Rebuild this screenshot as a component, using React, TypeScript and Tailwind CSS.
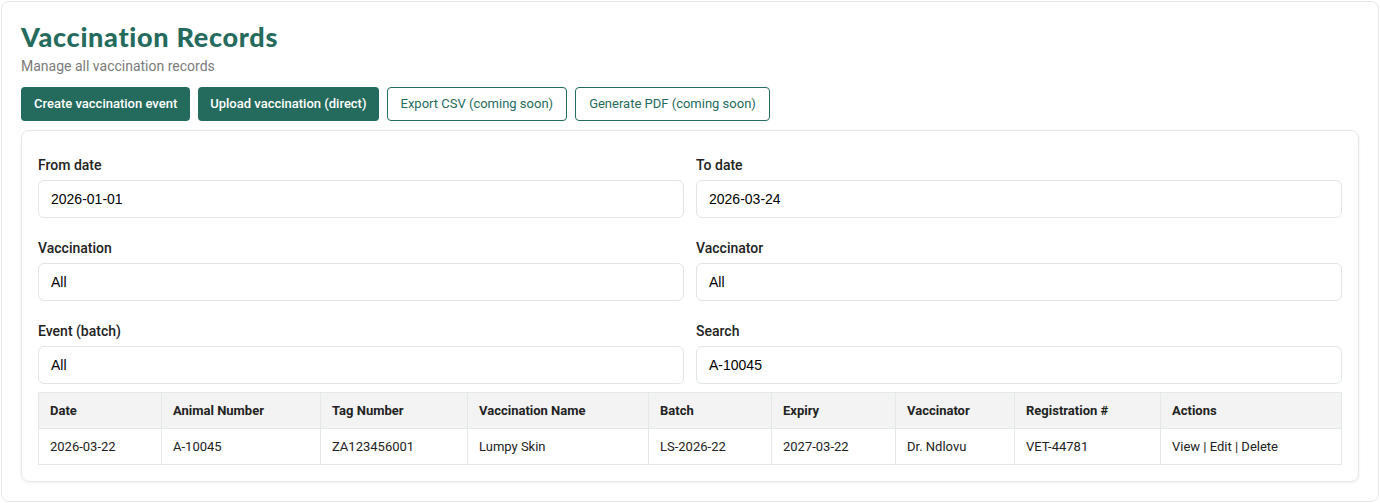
const filters = [
    { label: 'From date', value: '2026-01-01' },
    { label: 'To date', value: '2026-03-24' },
    { label: 'Vaccination', value: 'All' },
    { label: 'Vaccinator', value: 'All' },
    { label: 'Event (batch)', value: 'All' },
    { label: 'Search', value: 'A-10045' },
];

const columns = [
    { name: 'Date', w: 'w-[123px]' },
    { name: 'Animal Number', w: 'w-[159px]' },
    { name: 'Tag Number', w: 'w-[147px]' },
    { name: 'Vaccination Name', w: 'w-[181px]' },
    { name: 'Batch', w: 'w-[123px]' },
    { name: 'Expiry', w: 'w-[124px]' },
    { name: 'Vaccinator', w: 'w-[119px]' },
    { name: 'Registration #', w: 'w-[146px]' },
    { name: 'Actions', w: '' },
];

const rows = [
    ['2026-03-22', 'A-10045', 'ZA123456001', 'Lumpy Skin', 'LS-2026-22', '2027-03-22', 'Dr. Ndlovu', 'VET-44781', 'View | Edit | Delete'],
];

export default function App() {
    return (
        <div className="min-h-[503px] bg-white p-px font-['Roboto',sans-serif]">
            <div className="border border-[#e3e8ea] rounded-lg px-[19px] pt-[19px] pb-[19px]">
                <h1 className="text-[27px] leading-[32px] font-black text-[#256b5d] font-['Lato',sans-serif] tracking-[0.7px]">Vaccination Records</h1>
                <p className="text-sm text-[#7b7b7b] mt-[3px]">Manage all vaccination records</p>
                <div className="flex gap-2 mt-[11px]">
                    <button className="h-[34px] px-[13px] rounded bg-[#256b5d] text-white text-[13px] font-medium">Create vaccination event</button>
                    <button className="h-[34px] px-3 rounded bg-[#256b5d] text-white text-[13px] font-medium">Upload vaccination (direct)</button>
                    <button className="h-[34px] px-[13px] rounded border border-[#256b5d] bg-white text-[#256b5d] text-[13px]">Export CSV (coming soon)</button>
                    <button className="h-[34px] px-[13px] rounded border border-[#256b5d] bg-white text-[#256b5d] text-[13px]">Generate PDF (coming soon)</button>
                </div>
                <div className="mt-[9px] border border-[#e3e8ea] rounded-lg shadow-[0_1px_3px_rgba(0,0,0,0.06)] px-4 pt-[26px] pb-4">
                    <div className="grid grid-cols-2 gap-x-3 gap-y-[22px]">
                        {filters.map((f) => (
                            <div key={f.label}>
                                <label className="block text-sm font-medium text-[#222] leading-4">{f.label}</label>
                                <div className="mt-[7px] h-[38px] border border-[#e0e6e8] rounded-md px-3 flex items-center text-sm text-black font-['Liberation_Sans',sans-serif]">{f.value}</div>
                            </div>
                        ))}
                    </div>
                    <table className="mt-[8px] w-full border-collapse text-[13px] text-[#222]">
                        <thead>
                            <tr className="bg-[#f3f3f3]">
                                {columns.map((c) => (
                                    <th key={c.name} className={`${c.w} h-9 border border-[#e3e8ea] px-[11px] text-left font-bold`}>{c.name}</th>
                                ))}
                            </tr>
                        </thead>
                        <tbody>
                            {rows.map((r, i) => (
                                <tr key={i}>
                                    {r.map((cell, j) => (
                                        <td key={j} className="h-9 border border-[#e3e8ea] px-[11px]">{cell}</td>
                                    ))}
                                </tr>
                            ))}
                        </tbody>
                    </table>
                </div>
            </div>
        </div>
    );
}
